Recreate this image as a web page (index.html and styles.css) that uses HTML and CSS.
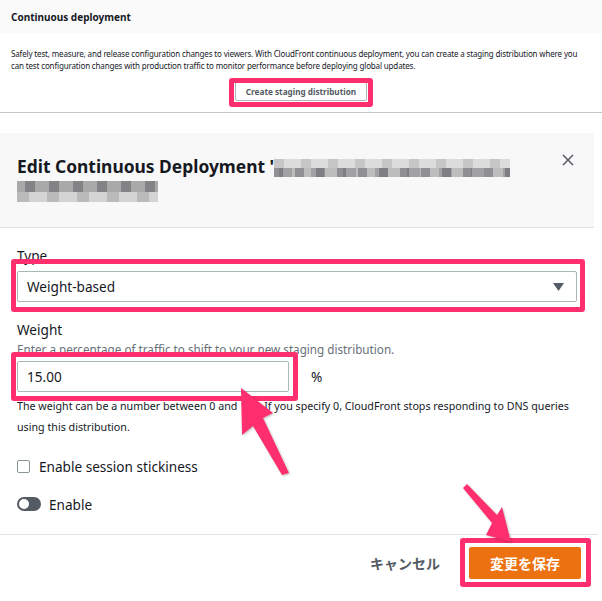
FILE: index.html
```html
<!DOCTYPE html>
<html lang="ja">
<head>
<meta charset="utf-8">
<title>Edit Continuous Deployment</title>
<link rel="stylesheet" href="styles.css">
</head>
<body>
<section class="top">
  <div class="top-head"><h3>Continuous deployment</h3></div>
  <div class="top-body">
    <p>Safely test, measure, and release configuration changes to viewers. With CloudFront continuous deployment, you can create a staging distribution where you can test configuration changes with production traffic to monitor performance before deploying global updates.</p>
    <div class="center"><span class="hl hl-create"><button class="btn-create">Create staging distribution</button></span></div>
  </div>
</section>

<section class="modal">
  <div class="modal-head">
    <h2>Edit Continuous Deployment '<span class="blur b1"></span><br><span class="blur b2"></span></h2>
    <svg class="close" width="12" height="12" viewBox="0 0 12 12"><path d="M1 1L11 11M11 1L1 11" stroke="#545b64" stroke-width="1.5" fill="none"/></svg>
  </div>
  <div class="modal-body">
    <label class="lbl">Type</label>
    <div class="hl hl-select">
      <div class="select"><span>Weight-based</span><svg width="11" height="8" viewBox="0 0 11 8"><path d="M0 0H11L5.5 8Z" fill="#545b64"/></svg></div>
    </div>
    <label class="lbl lbl-weight">Weight</label>
    <div class="desc">Enter a percentage of traffic to shift to your new staging distribution.</div>
    <div class="input-row">
      <div class="hl hl-input"><div class="input">15.00</div></div>
      <span class="pct">%</span>
    </div>
    <p class="help">The weight can be a number between 0 and 100. If you specify 0, CloudFront stops responding to DNS queries using this distribution.</p>
    <div class="check-row"><span class="checkbox"></span><span>Enable session stickiness</span></div>
    <div class="toggle-row"><span class="toggle"><span class="knob"></span></span><span>Enable</span></div>
  </div>
  <div class="modal-foot">
    <button class="btn-cancel">キャンセル</button>
    <span class="hl hl-save"><button class="btn-save">変更を保存</button></span>
  </div>
</section>

<svg class="arrows" width="602" height="601" viewBox="0 0 602 601">
  <polygon points="241,388 273,413 263,418 289,473 282,475 253,426 242,435" fill="#ff2e6e"/>
  <polygon points="463,488 467,484 497,515 502,507 511,542 486,535 492,523" fill="#ff2e6e"/>
</svg>
</body>
</html>
```

FILE: styles.css
```css
* { box-sizing: border-box; }
html, body { margin: 0; padding: 0; background: #fff; }
body {
  font-family: "Noto Sans", "Noto Sans CJK JP", sans-serif;
  color: #16191f;
  width: 602px;
  height: 601px;
  overflow: hidden;
}
button { font-family: inherit; cursor: pointer; }

.hl { position: relative; display: block; }
.hl::after {
  content: "";
  position: absolute;
  border: 5px solid #ff2e6e;
  border-radius: 3px;
  pointer-events: none;
}

/* Top section */
.top-head {
  height: 33px;
  background: #fafafa;
  padding-left: 11px;
  display: flex;
  align-items: center;
}
.top-head h3 { margin: 0; font-size: 10px; font-weight: 700; }
.top-body {
  padding: 15px 11px 11px;
  border-bottom: 1px solid #c6c6c6;
}
.top-body p { margin: 0; font-size: 8px; line-height: 12px; letter-spacing: -0.15px; }
.center { display: flex; justify-content: center; margin-top: 10px; }
.hl-create { display: block; }
.hl-create::after { top: -4px; bottom: -6px; left: -6px; right: -6px; }
.btn-create {
  display: block;
  height: 19px;
  width: 132px;
  padding: 0;
  border: 1px solid #aab7b8;
  border-radius: 2px;
  background: #fff;
  color: #545b64;
  font-size: 8.2px;
  font-weight: 700;
}

/* Modal */
.modal { width: 594px; margin-top: 20px; }
.modal-head {
  position: relative;
  height: 95px;
  background: #f8f8f8;
  border-bottom: 1px solid #e2e2e2;
  padding: 22px 17px 0;
}
.modal-head h2 {
  margin: 0;
  font-size: 17.4px;
  line-height: 23px;
  font-weight: 700;
}
.close { position: absolute; right: 20px; top: 21px; }
.blur { display: inline-block; vertical-align: middle; }
.b1 {
  width: 236px;
  height: 18px;
  background:
    repeating-linear-gradient(90deg, rgba(60,60,70,.35) 0 9px, transparent 9px 21px) 0 9px / 100% 9px no-repeat,
    repeating-linear-gradient(90deg, rgba(80,80,90,.25) 0 13px, transparent 13px 32px) 5px 9px / 100% 9px no-repeat,
    repeating-linear-gradient(90deg, rgba(0,0,0,.10) 0 10px, transparent 10px 27px) 0 0 / 100% 9px no-repeat,
    linear-gradient(#dcdcdc, #dcdcdc) 0 0 / 100% 9px no-repeat,
    linear-gradient(#bdbdbd, #bdbdbd) 0 9px / 100% 9px no-repeat;
}
.b2 {
  width: 141px;
  height: 21px;
  margin-top: 1px;
  background:
    repeating-linear-gradient(90deg, rgba(60,60,70,.35) 0 10px, transparent 10px 24px) 8px 0 / 100% 11px no-repeat,
    repeating-linear-gradient(90deg, rgba(0,0,0,.12) 0 12px, transparent 12px 30px) 0 11px / 100% 10px no-repeat,
    linear-gradient(#a9a9a9, #a9a9a9) 0 0 / 100% 11px no-repeat,
    linear-gradient(#d4d4d4, #d4d4d4) 0 11px / 100% 10px no-repeat;
}

.modal-body { padding: 18px 17px 20px; }
.lbl { display: block; font-size: 13.6px; line-height: 20px; margin-bottom: 5px; }
.hl-select::after { top: -12px; bottom: -10px; left: -6px; right: -8px; }
.select {
  height: 31px;
  border: 1px solid #aab7b8;
  border-radius: 2px;
  background: #fff;
  display: flex;
  align-items: center;
  justify-content: space-between;
  padding: 0 12px 0 9px;
  font-size: 13.6px;
}
.lbl-weight { margin-top: 18px; margin-bottom: 2px; }
.desc { font-size: 11.7px; line-height: 14px; color: #687078; }
.input-row { display: flex; align-items: center; margin-top: 5px; }
.hl-input::after { top: -9px; bottom: -9px; left: -6px; right: -9px; }
.input {
  width: 272px;
  height: 31px;
  border: 1px solid #aab7b8;
  border-radius: 2px;
  background: #fff;
  display: flex;
  align-items: center;
  padding-left: 9px;
  font-size: 13.6px;
}
.pct { margin-left: 22px; font-size: 13.6px; }
.help { margin: 4px 0 0; font-size: 10.7px; line-height: 21px; color: #16191f; }
.check-row, .toggle-row {
  display: flex;
  align-items: center;
  height: 20px;
  font-size: 13.6px;
}
.check-row { margin-top: 18px; }
.toggle-row { margin-top: 18px; }
.checkbox {
  width: 13px;
  height: 13px;
  border: 1px solid #879596;
  border-radius: 2px;
  background: #fff;
  margin-right: 9px;
}
.toggle {
  width: 24px;
  height: 14px;
  border-radius: 7px;
  background: #545b64;
  position: relative;
  margin-right: 8px;
  display: flex;
  align-items: center;
  padding-left: 2px;
}
.knob { width: 10px; height: 10px; border-radius: 50%; background: #fff; }

.modal-foot {
  border-top: 1px solid #e2e2e2;
  padding: 12px 17px 0 0;
  display: flex;
  justify-content: flex-end;
  align-items: center;
  width: 598px;
}
.btn-cancel {
  background: none;
  border: none;
  font-size: 14px;
  font-weight: 700;
  color: #545b64;
  padding: 0 20px;
  margin-right: 9px;
  height: 32px;
}
.hl-save { display: block; }
.hl-save::after { top: -9px; bottom: -8px; left: -9px; right: -10px; }
.btn-save {
  display: block;
  width: 112px;
  height: 32px;
  border: none;
  border-radius: 2px;
  background: #ec7211;
  color: #fff;
  font-size: 14px;
  font-weight: 700;
  padding: 0;
}

.arrows {
  position: absolute;
  top: 0;
  left: 0;
  pointer-events: none;
  filter: drop-shadow(1px 1px 1px rgba(0,0,0,.25));
}
```
